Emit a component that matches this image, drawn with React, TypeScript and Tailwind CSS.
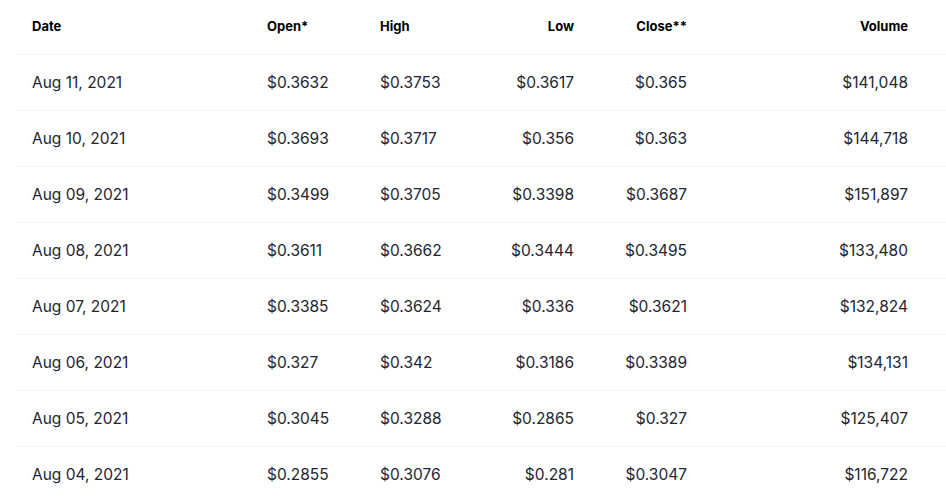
import React from 'react';

const ROWS = [
  ['Aug 11, 2021', '$0.3632', '$0.3753', '$0.3617', '$0.365', '$141,048'],
  ['Aug 10, 2021', '$0.3693', '$0.3717', '$0.356', '$0.363', '$144,718'],
  ['Aug 09, 2021', '$0.3499', '$0.3705', '$0.3398', '$0.3687', '$151,897'],
  ['Aug 08, 2021', '$0.3611', '$0.3662', '$0.3444', '$0.3495', '$133,480'],
  ['Aug 07, 2021', '$0.3385', '$0.3624', '$0.336', '$0.3621', '$132,824'],
  ['Aug 06, 2021', '$0.327', '$0.342', '$0.3186', '$0.3389', '$134,131'],
  ['Aug 05, 2021', '$0.3045', '$0.3288', '$0.2865', '$0.327', '$125,407'],
  ['Aug 04, 2021', '$0.2855', '$0.3076', '$0.281', '$0.3047', '$116,722'],
];

const App: React.FC = () => {
  return (
    <div className="min-h-screen bg-white pl-4 overflow-hidden font-['Inter',sans-serif] text-[#222531]">
      <table className="table-fixed border-collapse w-[960px]">
        <colgroup>
          <col className="w-[235px]" />
          <col className="w-[113px]" />
          <col className="w-[113px]" />
          <col className="w-[113px]" />
          <col className="w-[113px]" />
          <col className="w-[221px]" />
          <col />
        </colgroup>
        <thead>
          <tr className="h-[54px] border-b border-[#f3f4f6] text-[13px] font-bold text-black">
            <th className="px-4 pb-px text-left">Date</th>
            <th className="px-4 pb-px text-left">Open*</th>
            <th className="px-4 pb-px text-left">High</th>
            <th className="px-4 pb-px text-right">Low</th>
            <th className="px-4 pb-px text-right">Close**</th>
            <th className="px-4 pb-px text-right">Volume</th>
            <th />
          </tr>
        </thead>
        <tbody className="text-[15.5px]">
          {ROWS.map((r) => (
            <tr key={r[0]} className="h-[56px] border-b border-[#f3f4f6]">
              <td className="px-4 pt-0.5 text-left">{r[0]}</td>
              <td className="px-4 pt-0.5 text-left">{r[1]}</td>
              <td className="px-4 pt-0.5 text-left">{r[2]}</td>
              <td className="px-4 pt-0.5 text-right">{r[3]}</td>
              <td className="px-4 pt-0.5 text-right">{r[4]}</td>
              <td className="px-4 pt-0.5 text-right">{r[5]}</td>
              <td />
            </tr>
          ))}
        </tbody>
      </table>
    </div>
  );
};

export default App;
